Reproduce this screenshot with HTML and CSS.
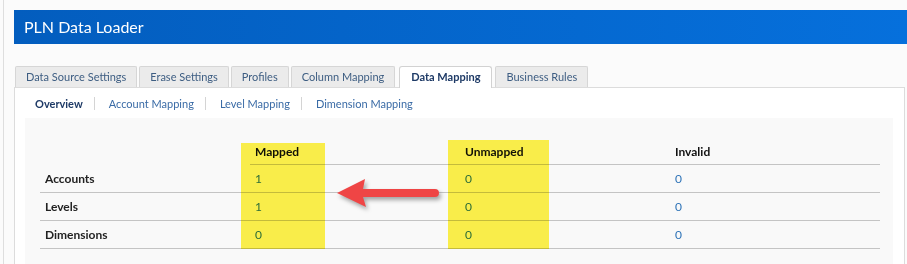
FILE: index.html
```html
<!DOCTYPE html>
<html lang="en">
<head>
  <meta charset="UTF-8">
  <title>PLN Data Loader</title>
  <link rel="stylesheet" href="styles.css">
</head>
<body>
  <div class="page">
    <div class="app-header">PLN Data Loader</div>

    <div class="tab-bar">
      <div class="tab">Data Source Settings</div>
      <div class="tab">Erase Settings</div>
      <div class="tab">Profiles</div>
      <div class="tab">Column Mapping</div>
      <div class="tab active">Data Mapping</div>
      <div class="tab">Business Rules</div>
    </div>

    <div class="panel">
      <div class="subtabs">
        <span class="subtab current">Overview</span>
        <span class="sep"></span>
        <span class="subtab">Account Mapping</span>
        <span class="sep"></span>
        <span class="subtab">Level Mapping</span>
        <span class="sep"></span>
        <span class="subtab">Dimension Mapping</span>
      </div>

      <div class="overview">
        <table class="summary">
          <thead>
            <tr>
              <th class="blank"></th>
              <th>Mapped</th>
              <th>Unmapped</th>
              <th>Invalid</th>
            </tr>
          </thead>
          <tbody>
            <tr>
              <td class="label">Accounts</td>
              <td>1</td>
              <td>0</td>
              <td>0</td>
            </tr>
            <tr>
              <td class="label">Levels</td>
              <td>1</td>
              <td>0</td>
              <td>0</td>
            </tr>
            <tr>
              <td class="label">Dimensions</td>
              <td>0</td>
              <td>0</td>
              <td>0</td>
            </tr>
          </tbody>
        </table>

        <!-- annotations drawn over the screenshot -->
        <div class="highlight hl-mapped"></div>
        <div class="highlight hl-unmapped"></div>
        <svg class="arrow" width="115" height="45" viewBox="0 0 115 45" xmlns="http://www.w3.org/2000/svg">
          <path d="M7 21 L35 7 L33 17 L105 17 A4 4 0 0 1 105 25 L33 25 L36 35 Z" fill="#ef4545"/>
        </svg>
      </div>
    </div>
  </div>
</body>
</html>
```

FILE: styles.css
```css
body {
  margin: 0;
  background: #fbfbfb;
  font-family: Lato, "Open Sans", sans-serif;
  color: #222;
  overflow: hidden;
}

.page {
  margin-left: 3px;
  border-left: 1px solid #dedede;
  padding: 10px 0 0 10px;
  height: 254px;
}

.app-header {
  height: 34px;
  line-height: 34px;
  padding-left: 10px;
  background: linear-gradient(to right, #035dbe, #0670dc);
  color: #fff;
  font-size: 16px;
}

.tab-bar {
  display: flex;
  gap: 2px;
  margin-top: 22px;
  padding-left: 1px;
  height: 21px;
  position: relative;
  z-index: 1;
}

.tab {
  height: 20px;
  line-height: 20px;
  padding: 0 10px;
  background: #ebebeb;
  border: 1px solid #d6d6d6;
  border-bottom: none;
  border-radius: 2px 2px 0 0;
  font-size: 11px;
  color: #3d5d82;
}

.tab.active {
  height: 21px;
  margin: 0 1px 0 2px;
  padding: 0 11px;
  background: #fff;
  border-color: #d2d2d2;
  border-radius: 3px 3px 0 0;
  font-weight: bold;
  color: #1e3a66;
}

.panel {
  margin-right: 2px;
  background: #fff;
  border: 1px solid #dcdcdc;
  border-bottom: none;
  height: 176px;
}

.subtabs {
  display: flex;
  align-items: center;
  height: 30px;
  padding-left: 20px;
  font-size: 11px;
}

.subtab {
  color: #3a6ba6;
}

.subtab.current {
  font-weight: bold;
  color: #1e3a66;
}

.sep {
  width: 1px;
  height: 13px;
  margin: 0 14px 0 11px;
  background: #d4d4d4;
}

.overview {
  position: relative;
  margin: 0 11px 0 10px;
  padding: 20px 13px 0 15px;
  background: #f9f9f9;
  height: 126px;
}

.summary {
  width: 840px;
  border-collapse: collapse;
  table-layout: fixed;
  font-size: 12px;
}

.summary th,
.summary td {
  text-align: left;
  padding: 0 5px;
}

.summary th {
  height: 26px;
  border-bottom: 1px solid #c4c4c4;
  font-weight: bold;
  color: #111;
}

.summary th.blank {
  border-bottom: none;
}

.summary td {
  height: 27px;
  border-bottom: 1px solid #c4c4c4;
  color: #2f74b8;
}

.summary td.label {
  font-weight: bold;
  color: #222;
}

.highlight {
  position: absolute;
  background: #fff34c;
  mix-blend-mode: multiply;
}

.hl-mapped {
  left: 216px;
  top: 25px;
  width: 84px;
  height: 106px;
}

.hl-unmapped {
  left: 423px;
  top: 22px;
  width: 101px;
  height: 109px;
}

.arrow {
  position: absolute;
  left: 305px;
  top: 54px;
  filter: drop-shadow(2px 3px 2px rgba(0, 0, 0, 0.35));
}
```
